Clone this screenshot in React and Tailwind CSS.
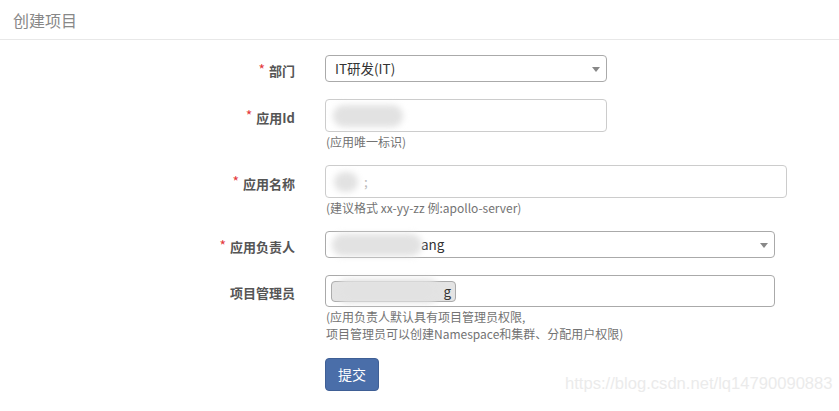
import React from 'react';

const font = { fontFamily: '"Noto Sans CJK SC", "Noto Sans", sans-serif' };

function Blur({ className }) {
  return <div className={`absolute rounded-full bg-[#e2e2e2] blur-[3px] ${className}`} />;
}

function Label({ text, required, h }) {
  return (
    <div className={`w-[295px] shrink-0 flex items-center justify-end pt-[4px] ${h}`}>
      {required && <span className="text-[14px] text-[#e4393c] mr-[4px] -mt-[4px]">*</span>}
      <span className="text-[13px] font-bold text-[#555]">{text}</span>
    </div>
  );
}

function Select({ width, children }) {
  return (
    <div className={`relative h-[27px] ${width} rounded-[4px] border border-[#aaa] bg-white flex items-center px-[9px] text-[13.5px] text-[#333]`}>
      {children}
      <span className="absolute right-[6px] top-[11px] w-0 h-0 border-l-[4px] border-r-[4px] border-t-[5px] border-l-transparent border-r-transparent border-t-[#888]" />
    </div>
  );
}

function Input({ width, children }) {
  return (
    <div className={`relative h-[33px] ${width} rounded-[4px] border border-[#ccc] bg-white flex items-center px-[6px] text-[13.5px] text-[#333]`}>
      {children}
    </div>
  );
}

function Help({ children }) {
  return <div className="text-[12px] leading-[17px] text-[#737373] mt-[1px] pl-[1px]">{children}</div>;
}

export default function App() {
  return (
    <div className="w-[839px] h-[411px] bg-white overflow-hidden relative" style={font}>
      <div className="h-[40px] border-b border-[#e8e8e8] flex items-center pl-[13px]">
        <span className="text-[16px] text-[#888]">创建项目</span>
      </div>

      <div className="pt-[15px] flex flex-col">
        <div className="flex">
          <Label text="部门" required h="h-[28px]" />
          <div className="ml-[30px]">
            <Select width="w-[282px]">IT研发(IT)</Select>
          </div>
        </div>

        <div className="flex mt-[16px]">
          <Label text="应用Id" required h="h-[33px]" />
          <div className="ml-[30px]">
            <Input width="w-[282px]">
              <Blur className="left-[7px] top-[5px] w-[70px] h-[22px]" />
            </Input>
            <Help>(应用唯一标识)</Help>
          </div>
        </div>

        <div className="flex mt-[15px]">
          <Label text="应用名称" required h="h-[33px]" />
          <div className="ml-[30px]">
            <Input width="w-[462px]">
              <Blur className="left-[8px] top-[6px] w-[24px] h-[20px]" />
              <span className="ml-[32px] text-[#bbb]">;</span>
            </Input>
            <Help>(建议格式 xx-yy-zz 例:apollo-server)</Help>
          </div>
        </div>

        <div className="flex mt-[15px]">
          <Label text="应用负责人" required h="h-[28px]" />
          <div className="ml-[30px]">
            <Select width="w-[450px]">
              <Blur className="left-[6px] top-[2px] w-[90px] h-[22px]" />
              <span className="ml-[86px]">ang</span>
            </Select>
          </div>
        </div>

        <div className="flex mt-[16px]">
          <Label text="项目管理员" h="h-[32px]" />
          <div className="ml-[30px]">
            <div className="relative h-[32px] w-[450px] rounded-[4px] border border-[#aaa] bg-white flex items-center px-[5px]">
              <div className="relative h-[21px] w-[125px] rounded-[4px] border border-[#aaa] bg-[#e4e4e4] flex items-center justify-end pr-[4px] text-[13.5px] text-[#333]">
                <Blur className="left-[4px] top-[-3px] w-[104px] h-[24px] bg-[#d0d0d0]" />
                <span>g</span>
              </div>
            </div>
            <Help>
              (应用负责人默认具有项目管理员权限,
              <br />
              项目管理员可以创建Namespace和集群、分配用户权限)
            </Help>
          </div>
        </div>

        <div className="flex mt-[16px]">
          <div className="w-[295px] shrink-0" />
          <button className="ml-[30px] h-[33px] w-[54px] rounded-[4px] bg-[#4a6ea9] border border-[#3f5f95] text-white text-[14px]">
            提交
          </button>
        </div>
      </div>

      <div className="absolute left-[565px] top-[372px] text-[16.6px] text-[#ebebeb]" style={{ fontFamily: '"Liberation Sans", Arial, sans-serif' }}>
        https://blog.csdn.net/lq14790090883
      </div>
    </div>
  );
}
